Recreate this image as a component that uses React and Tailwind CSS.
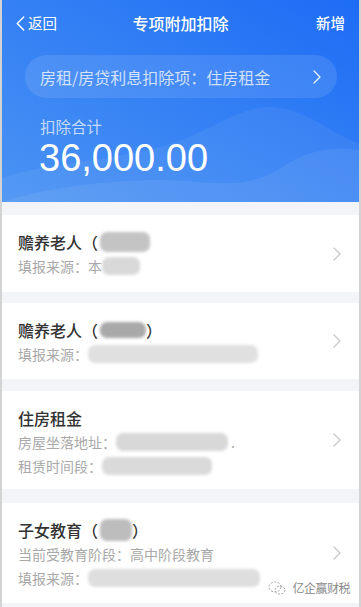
import React from 'react';

const cjk = { fontFamily: '"Noto Sans CJK SC", "Noto Sans", sans-serif' };

// blurred mosaic block standing in for hidden personal info
const Blur = ({ w, h = 20, tone = 'bg-[#d6d6d6]', className = '' }) => (
  <span
    className={`inline-block align-middle rounded-[7px] blur-[1.5px] ${tone} ${className}`}
    style={{ width: w, height: h }}
  />
);

const Chevron = ({ className = '', left = false }) => (
  <svg width="8" height="14" viewBox="0 0 8 14" className={className}>
    <polyline
      points={left ? '7,1 1,7 7,13' : '1,1 7,7 1,13'}
      fill="none"
      stroke="currentColor"
      strokeWidth="1.3"
      strokeLinecap="round"
      strokeLinejoin="round"
    />
  </svg>
);

const Card = ({ height, title, children, extra }) => (
  <div className="relative bg-white flex items-start px-[16px] pt-[16px]" style={{ height }}>
    <div className="flex-1 min-w-0">
      <div className="text-[16px] leading-[22px] font-medium text-[#333] flex items-center">{title}</div>
      <div className="mt-[1px] text-[14px] leading-[24px] text-[#a8a8a8]">{children}</div>
    </div>
    <div className="self-stretch flex items-center -mt-[16px] pr-[2px]">
      <Chevron className="text-[#c9c9c9]" />
    </div>
    {extra}
  </div>
);

export default function App() {
  return (
    <div className="w-[361px] h-[607px] overflow-hidden bg-[#f3f4f8] border-x-2 border-[#d3d3d3]" style={cjk}>
      {/* Header */}
      <div className="relative h-[202px] overflow-hidden bg-linear-to-bl from-[#1d6cf5] to-[#4a93f3] text-white">
        <svg className="absolute inset-0" width="357" height="202" viewBox="0 0 357 202">
          <path d="M0,178 C60,158 120,162 180,140 C215,126 240,106 270,107 C305,109 330,134 357,144 L357,202 L0,202 Z" fill="#fff" opacity="0.06" />
          <path d="M0,202 C50,186 110,180 165,180 C215,182 245,192 285,164 C312,148 335,147 357,150 L357,202 Z" fill="#fff" opacity="0.07" />
        </svg>
        <div className="relative">
          <div className="h-[46px] flex items-center px-[14px]">
            <div className="flex items-center w-[80px]">
              <Chevron left className="text-white mr-[3px] h-[15px] w-[9px]" />
              <span className="text-[14.5px]">返回</span>
            </div>
            <div className="flex-1 text-center text-[16px] font-medium">专项附加扣除</div>
            <div className="w-[80px] text-right text-[14.5px] font-medium">新增</div>
          </div>
          <div className="mt-[9px] ml-[23px] mr-[22px] h-[43px] rounded-full bg-white/10 flex items-center pl-[15px] pr-[16px]">
            <span className="flex-1 text-[16px] text-white/75">房租/房贷利息扣除项：住房租金</span>
            <Chevron className="text-white/90 h-[14px]" />
          </div>
          <div className="mt-[17px] pl-[38px] text-[15.5px] leading-[22px] text-white/70">扣除合计</div>
          <div
            className="mt-[1px] pl-[37px] text-[38px] leading-[40px] text-white"
            style={{ fontFamily: '"Liberation Sans", Arial, sans-serif' }}
          >
            36,000.00
          </div>
        </div>
      </div>

      {/* List */}
      <div className="mt-[13px] flex flex-col">
        <Card
          height={77}
          title={<>赡养老人（<Blur w={50} h={20} tone="bg-[#c4c4c4]" className="ml-[2px]" /></>}
        >
          <div className="flex items-center">
            填报来源：本<Blur w={38} h={18} tone="bg-[#d9d9d9]" />
          </div>
        </Card>

        <div className="h-[11px]" />
        <Card
          height={76}
          title={<>赡养老人（<Blur w={46} h={16} tone="bg-[#a9a9a9]" className="ml-[2px]" />）</>}
        >
          <div className="flex items-center">
            填报来源：<Blur w={170} h={18} tone="bg-[#e0e0e0]" />
          </div>
        </Card>

        <div className="h-[12px]" />
        <Card height={98} title={<>住房租金</>}>
          <div className="flex items-center">
            房屋坐落地址：<Blur w={112} h={18} tone="bg-[#d8d8d8]" /><span className="ml-[3px]">.</span>
          </div>
          <div className="flex items-center">
            租赁时间段：<Blur w={110} h={18} tone="bg-[#dadada]" />
          </div>
        </Card>

        <div className="h-[14px]" />
        <Card
          height={100}
          title={<>子女教育（<Blur w={32} h={22} tone="bg-[#bdbdbd]" className="ml-[2px]" />）</>}
          extra={
            <div className="absolute right-[9px] bottom-[8px] flex items-center gap-[6px] text-[#8a8a8a]">
              <svg width="18" height="14" viewBox="0 0 18 14">
                <ellipse cx="7" cy="6" rx="6" ry="5" fill="none" stroke="#9a9a9a" strokeWidth="0.9" strokeDasharray="2 1.5" />
                <ellipse cx="12" cy="9" rx="5" ry="4" fill="none" stroke="#9a9a9a" strokeWidth="0.9" strokeDasharray="2 1.5" />
              </svg>
              <span className="text-[12px] leading-[14px] tracking-[-0.5px]">亿企赢财税</span>
            </div>
          }
        >
          <div>当前受教育阶段：高中阶段教育</div>
          <div className="flex items-center">
            填报来源：<Blur w={172} h={18} tone="bg-[#dedede]" />
          </div>
        </Card>
      </div>
    </div>
  );
}
